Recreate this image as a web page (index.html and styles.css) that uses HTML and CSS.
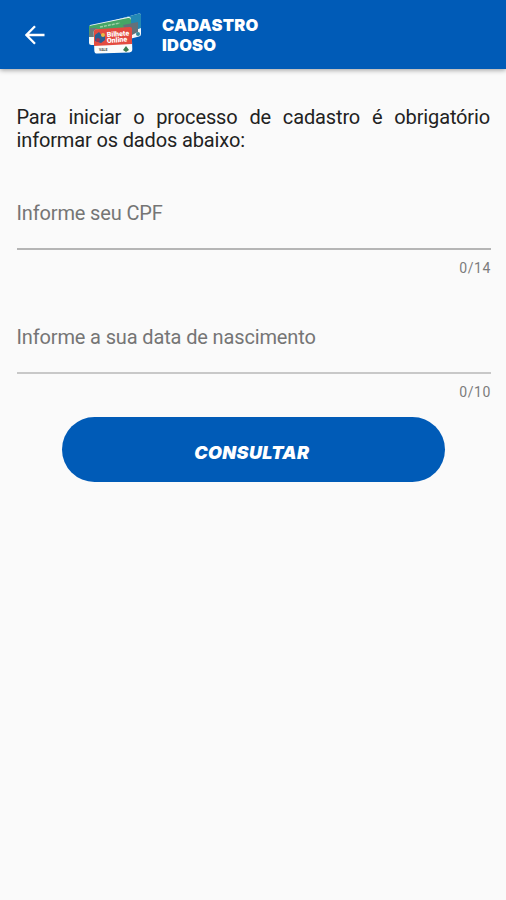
FILE: index.html
```html
<!DOCTYPE html>
<html lang="pt-BR">
<head>
    <meta charset="UTF-8">
    <meta name="viewport" content="width=device-width, initial-scale=1.0">
    <title>Cadastro Idoso</title>
    <link rel="stylesheet" href="styles.css">
</head>
<body>
    <header class="topbar">
        <button class="back" type="button" aria-label="Voltar">
            <svg viewBox="0 0 20 20" width="20" height="20">
                <path d="M19.5 10H2M10 1.2L1.4 10l8.6 8.8" fill="none" stroke="#fff" stroke-width="2.3"/>
            </svg>
        </button>
        <svg class="logo" viewBox="0 0 54 41" width="54" height="41">
            <!-- back cards -->
            <path d="M24 8L51 .5q2-.4 2 1.500V21q0 2-2 2.600L30 29z" fill="#f4f8fb"/>
            <path d="M24 8L51 .5q2-.4 2 1.500V15L30 24z" fill="#2388b4"/>
            <path d="M2 12L40 4q3-.5 3 2v22q0 3-3 3.500L4 32q-3 .3-3-2V14z" fill="#f5f8f8"/>
            <path d="M1 13L40 5q3-.5 3 2v17L1 24z" fill="#45a565"/>
            <path d="M35 12l15-3v10l-10 5z" fill="#64717a"/>
            <path d="M2 15h7v9H1z" fill="#687b7c"/>
            <path d="M12 14l20-4" stroke="#9fd0a6" stroke-width="1.500" stroke-dasharray="3 1"/>
            <circle cx="50" cy="21" r="2" fill="#368b9b"/>
            <!-- front card -->
            <rect x="6" y="16" width="38" height="24" rx="3" fill="#fafcfb" transform="rotate(-2 25 28)"/>
            <path d="M6 18q0-1.500 2-1.700L42 14q2 0 2 2v15L6 33z" fill="#e34b40"/>
            <path d="M7 22l4-3 3 4 3-2v6l-4 3-6-2z" fill="#295f93"/>
            <circle cx="15" cy="22" r="2" fill="#e9b946"/>
            <circle cx="10" cy="27" r="2" fill="#a53250"/>
            <text class="card-name" x="19" y="24" transform="rotate(-4 19 24)">Bilhete</text>
            <text class="card-name" x="19" y="30" transform="rotate(-4 19 30)">Online</text>
            <text class="card-foot" x="11" y="38">VALE</text>
            <path d="M35 37l3-4 3 4-3 2z" fill="#397b4d"/>
        </svg>
        <h1>CADASTRO<br>IDOSO</h1>
    </header>

    <main class="content">
        <p class="intro">Para iniciar o processo de cadastro é obrigatório informar os dados abaixo:</p>

        <form>
            <div class="field">
                <input type="text" id="cpf" maxlength="14" placeholder="Informe seu CPF">
                <span class="counter">0/14</span>
            </div>
            <div class="field">
                <input type="text" id="nascimento" class="soft" maxlength="10" placeholder="Informe a sua data de nascimento">
                <span class="counter">0/10</span>
            </div>
            <button class="submit" type="button">CONSULTAR</button>
        </form>
    </main>
</body>
</html>
```

FILE: styles.css
```css
* {
    box-sizing: border-box;
}

body {
    font-family: Roboto, Arial, sans-serif;
    background-color: #fafafa;
    margin: 0;
    min-height: 100vh;
}

/* Header */
.topbar {
    display: flex;
    align-items: center;
    height: 69px;
    padding-left: 25px;
    background-color: #005bb7;
    box-shadow: 0 1px 5px rgba(0, 0, 0, 0.4);
}

.back {
    display: flex;
    padding: 0;
    border: none;
    background: none;
    cursor: pointer;
}

.logo {
    margin: 0 20px 2px 43px;
}

.card-name {
    font-size: 7px;
    font-weight: 900;
    fill: #ffffff;
}

.card-foot {
    font-size: 3.5px;
    font-weight: 700;
    fill: #444444;
}

h1 {
    margin: 2px 0 0;
    font-family: Inter, sans-serif;
    font-size: 16.5px;
    font-weight: 900;
    line-height: 19.5px;
    letter-spacing: 0.2px;
    color: #ffffff;
}

/* Form */
.content {
    padding: 37px 15px 0 16.5px;
}

.intro {
    margin: 0;
    padding-right: 1px;
    font-size: 20px;
    line-height: 23px;
    letter-spacing: -0.14px;
    text-align: justify;
    color: #222222;
}

form {
    display: flex;
    flex-direction: column;
    padding-top: 26px;
}

.field {
    display: flex;
    flex-direction: column;
    height: 124px;
}

.field + .field {
    height: 115px;
}

.field input {
    width: 100%;
    height: 72px;
    padding: 0 0 1px;
    border: none;
    border-bottom: 2px solid #b5b5b5;
    background: none;
    font-family: inherit;
    font-size: 20px;
    letter-spacing: -0.14px;
    color: #222222;
}

.field .soft {
    border-bottom-color: #c8c8c8;
}

.field input::placeholder {
    color: #757575;
}

.counter {
    margin-top: 9px;
    align-self: flex-end;
    font-size: 14px;
    line-height: 18px;
    letter-spacing: 0.6px;
    color: #7c7c7c;
}

.submit {
    align-self: center;
    width: 383px;
    height: 65px;
    padding: 6px 4px 0 0;
    border: none;
    border-radius: 33px;
    background-color: #005bb7;
    font-family: Inter, sans-serif;
    font-size: 18px;
    font-style: italic;
    font-weight: 900;
    letter-spacing: 0.35px;
    color: #ffffff;
    cursor: pointer;
}
```
